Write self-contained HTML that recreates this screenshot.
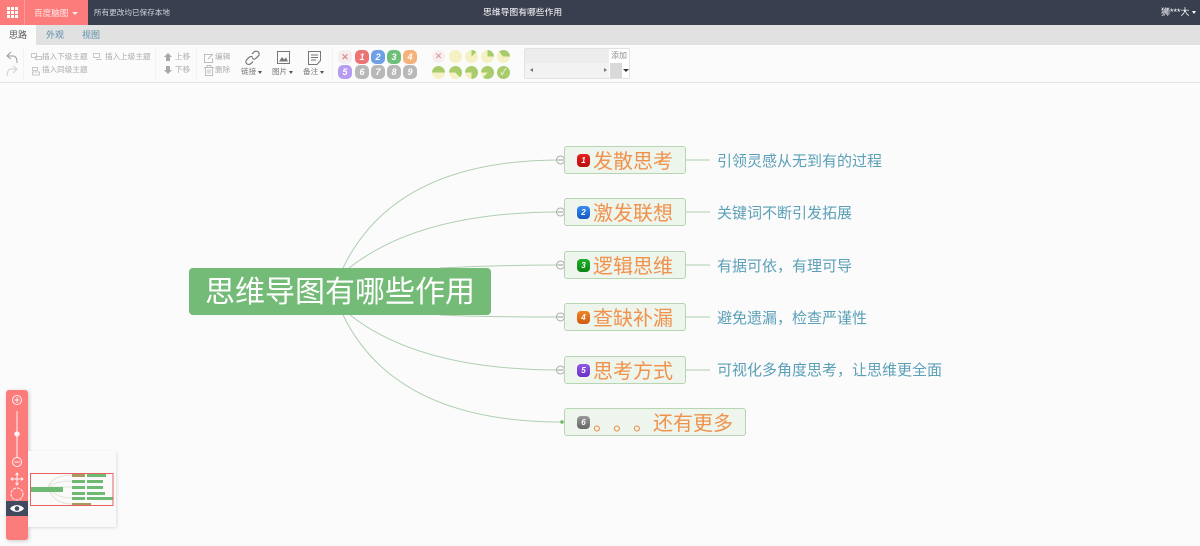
<!DOCTYPE html>
<html lang="zh"><head><meta charset="utf-8"><title>思维导图有哪些作用</title>
<style>
*{box-sizing:border-box}
html,body{margin:0;padding:0;width:1200px;height:546px;overflow:hidden;background:#fbfbfb;font-family:"Liberation Sans","Noto Sans CJK SC",sans-serif}
.a{position:absolute;white-space:nowrap}
.t{font-size:7.6px;color:#9a9a9a;line-height:12px}
.ic{position:absolute;width:14px;height:14px;border-radius:5px;color:#fff;font-size:9px;line-height:14px;text-align:center;font-style:italic;font-weight:bold}
.pg{position:absolute;width:13px;height:13px;border-radius:50%;background:#f5f1c4}
.node{position:absolute;left:564px;width:122px;height:28px;background:#eef5ec;border:1px solid #b5d5b3;border-radius:3px}
.nt{position:absolute;left:593px;font-size:20px;line-height:28px;color:#f0914c;white-space:nowrap;text-spacing-trim:space-all}
.sub{position:absolute;left:717px;font-size:15px;line-height:22px;color:#5b9fb8;white-space:nowrap}
.pri{position:absolute;left:577px;width:13px;height:13px;border-radius:4px;color:#fff;font-size:8px;line-height:13px;text-align:center;font-style:italic;font-weight:bold}
</style></head><body>
<!-- top bar -->
<div class="a" style="left:0;top:0;width:1200px;height:25px;background:#393f4f"></div>
<div class="a" style="left:0;top:0;width:88px;height:25px;background:#fc7c7c"></div>
<div class="a" style="left:24px;top:0;width:1px;height:25px;background:#fd9a9a"></div>
<svg class="a" style="left:7px;top:7px" width="11" height="11" fill="#fff"><rect x="0" y="0" width="3" height="3"/><rect x="4" y="0" width="3" height="3"/><rect x="8" y="0" width="3" height="3"/><rect x="0" y="4" width="3" height="3"/><rect x="4" y="4" width="3" height="3"/><rect x="8" y="4" width="3" height="3"/><rect x="0" y="8" width="3" height="3"/><rect x="4" y="8" width="3" height="3"/><rect x="8" y="8" width="3" height="3"/></svg>
<div class="a" style="left:34px;top:6px;font-size:8.6px;line-height:14px;color:#ffe9e9">百度脑图</div>
<div class="a" style="left:72px;top:12px;border:3px solid transparent;border-top:3px solid #ffe9e9"></div>
<div class="a" style="left:94px;top:6px;font-size:7.6px;line-height:14px;color:#d5d7dc">所有更改均已保存本地</div>
<div class="a" style="left:483px;top:5px;font-size:8.8px;line-height:14px;color:#fff">思维导图有哪些作用</div>
<div class="a" style="left:1161px;top:5px;font-size:9px;line-height:15px;color:#fff">狮***大</div>
<div class="a" style="left:1192px;top:11px;border:2.5px solid transparent;border-top:3px solid #fff"></div>
<!-- tabs -->
<div class="a" style="left:0;top:25px;width:1200px;height:20px;background:#e1e1e1"></div>
<div class="a" style="left:0;top:25px;width:36px;height:20px;background:#fbfbfb"></div>
<div class="a" style="left:9px;top:28px;font-size:9px;line-height:14px;color:#555">思路</div>
<div class="a" style="left:46px;top:28px;font-size:9px;line-height:14px;color:#5b8fa8">外观</div>
<div class="a" style="left:82px;top:28px;font-size:9px;line-height:14px;color:#5b8fa8">视图</div>
<!-- toolbar -->
<div class="a" style="left:0;top:45px;width:1200px;height:38px;background:#fbfbfb;border-bottom:1px solid #e4e4e4"></div>
<svg class="a" style="left:5px;top:50px" width="14" height="16" fill="none" stroke="#9a9a9a" stroke-width="1"><path d="M6 2L2 6L6 9M2 6H8C11 6 12 9 12 13"/></svg>
<svg class="a" style="left:5px;top:65px" width="14" height="14" fill="none" stroke="#cfcfcf" stroke-width="1"><path d="M8 1L12 4L8 8M12 4H6C3 4 2 8 2 11"/></svg>
<svg class="a" style="left:31px;top:52px" width="12" height="24" fill="none" stroke="#c8c8c8" stroke-width="1"><rect x="0.5" y="1.5" width="5" height="4"/><rect x="4.500" y="4.500" width="6" height="3"/><rect x="1.500" y="15.500" width="5" height="3"/><rect x="1.500" y="20" width="7" height="3"/></svg>
<div class="a t" style="left:42px;top:51px;color:#ababab">插入下级主题</div>
<svg class="a" style="left:93px;top:53px" width="10" height="9" fill="none" stroke="#c8c8c8"><rect x="0.5" y="0.5" width="6" height="4"/><path d="M3 6.500H9"/></svg>
<div class="a t" style="left:105px;top:51px;color:#ababab">插入上级主题</div>
<div class="a t" style="left:42px;top:64px;color:#ababab">插入同级主题</div>
<div class="a" style="left:23px;top:48px;width:1px;height:32px;background:#f3f3f3"></div>
<div class="a" style="left:155px;top:48px;width:1px;height:32px;background:#f3f3f3"></div>
<div class="a" style="left:196px;top:48px;width:1px;height:32px;background:#f3f3f3"></div>
<svg class="a" style="left:164px;top:53px" width="8" height="8" fill="#a8a8a8"><path d="M4 0L8 4H6V8H2V4H0Z"/></svg>
<svg class="a" style="left:164px;top:66px" width="8" height="8" fill="#a8a8a8"><path d="M2 0H6V4H8L4 8L0 4H2Z"/></svg>
<div class="a t" style="left:175px;top:51px;color:#ababab">上移</div>
<div class="a t" style="left:175px;top:64px;color:#ababab">下移</div>
<svg class="a" style="left:204px;top:53px" width="10" height="10" fill="none" stroke="#bdbdbd"><path d="M8 1.500H0.500V9.500H8.500V5M4 6L9 1"/></svg>
<svg class="a" style="left:204px;top:65px" width="10" height="11" fill="none" stroke="#bdbdbd"><path d="M0 2.500H10M3 2.500V0.500H7V2.500M1.500 2.500V10.500H8.500V2.500M4 4.500V8.500M6 4.500V8.500"/></svg>
<div class="a t" style="left:215px;top:51px;color:#ababab">编辑</div>
<div class="a t" style="left:215px;top:64px;color:#ababab">删除</div>
<svg class="a" style="left:245px;top:50px" width="15" height="16" fill="none" stroke="#777" stroke-width="1.200"><path d="M7 4L9 2C10.500 .8 12.500 1 13.500 2.200C14.500 3.500 14.300 5 13 6.300L11 8.300C9.800 9.300 8.300 9.300 7.300 8.300"/><path d="M8 11.500L6 13.500C4.500 14.800 2.600 14.700 1.500 13.500C.5 12.300 .7 10.600 2 9.400L4 7.400C5.200 6.400 6.700 6.400 7.700 7.400"/></svg>
<div class="a t" style="left:241px;top:66px;color:#777">链接</div>
<div class="a" style="left:258px;top:71px;border:2.500px solid transparent;border-top:3px solid #555"></div>
<svg class="a" style="left:277px;top:51px" width="13" height="13" fill="none" stroke="#777"><rect x="0.500" y="0.500" width="12" height="12"/><path d="M2 10.500L5 6L7 8.500L9 6.500L11 10.500Z" fill="#777" stroke="none"/></svg>
<div class="a t" style="left:272px;top:66px;color:#777">图片</div>
<div class="a" style="left:289px;top:71px;border:2.500px solid transparent;border-top:3px solid #555"></div>
<svg class="a" style="left:308px;top:51px" width="13" height="14" fill="none" stroke="#777"><path d="M0.500 0.500H12.500V9.500L9 13.500H0.500ZM3 4H10M3 6.500H10M3 9H8"/></svg>
<div class="a t" style="left:303px;top:66px;color:#777">备注</div>
<div class="a" style="left:320px;top:71px;border:2.500px solid transparent;border-top:3px solid #555"></div>
<div class="a" style="left:332px;top:48px;width:1px;height:32px;background:#f3f3f3"></div>
<!-- priority -->
<div class="ic" style="left:338px;top:50px;background:#f4eeee;color:#e08a8a;font-style:normal">✕</div>
<div class="ic" style="left:355px;top:50px;background:#ec7474">1</div>
<div class="ic" style="left:371px;top:50px;background:#6da0e6">2</div>
<div class="ic" style="left:387px;top:50px;background:#6cc07a">3</div>
<div class="ic" style="left:403px;top:50px;background:#f5b27a">4</div>
<div class="ic" style="left:338px;top:65px;background:#b59cf0">5</div>
<div class="ic" style="left:355px;top:65px;background:#b8b8b8">6</div>
<div class="ic" style="left:371px;top:65px;background:#b8b8b8">7</div>
<div class="ic" style="left:387px;top:65px;background:#b8b8b8">8</div>
<div class="ic" style="left:403px;top:65px;background:#b8b8b8">9</div>
<!-- progress -->
<div class="pg" style="left:432px;top:50px;background:#f7efef;color:#dd8a8a;font-size:9px;line-height:13px;text-align:center">✕</div>
<div class="pg" style="left:449px;top:50px"></div>
<div class="pg" style="left:465px;top:50px;background:conic-gradient(#f5f1c4 0 0,#a8cc6a 0 12.500%,#f5f1c4 12.500%)"></div>
<div class="pg" style="left:481px;top:50px;background:conic-gradient(#a8cc6a 0 25%,#f5f1c4 25%)"></div>
<div class="pg" style="left:497px;top:50px;background:conic-gradient(from -45deg,#a8cc6a 0 37.500%,#f5f1c4 37.500%)"></div>
<div class="pg" style="left:432px;top:66px;background:conic-gradient(from -90deg,#a8cc6a 0 50%,#f5f1c4 50%)"></div>
<div class="pg" style="left:449px;top:66px;background:conic-gradient(from -90deg,#a8cc6a 0 62.500%,#f5f1c4 62.500%)"></div>
<div class="pg" style="left:465px;top:66px;background:conic-gradient(from -90deg,#a8cc6a 0 75%,#f5f1c4 75%)"></div>
<div class="pg" style="left:481px;top:66px;background:conic-gradient(from -90deg,#a8cc6a 0 87.500%,#f5f1c4 87.500%)"></div>
<div class="pg" style="left:497px;top:66px;background:#a8cc6a;color:#fff;font-size:9px;line-height:13px;text-align:center">✓</div>
<!-- template box -->
<div class="a" style="left:524px;top:48px;width:106px;height:31px;border:1px solid #e2e2e2;border-radius:2px;background:#fff"></div>
<div class="a" style="left:525px;top:49px;width:84px;height:14px;background:#ececec"></div>
<div class="a t" style="left:611px;top:50px;color:#8a8a8a;font-size:8px">添加</div>
<div class="a" style="left:525px;top:63px;width:84px;height:15px;background:#f2f2f2"></div>
<div class="a" style="left:610px;top:63px;width:12px;height:15px;background:#d9d9d9"></div>
<div class="a" style="left:528px;top:68px;border:2px solid transparent;border-right:3px solid #777"></div>
<div class="a" style="left:604px;top:68px;border:2px solid transparent;border-left:3px solid #777"></div>
<div class="a" style="left:623px;top:69px;border:3px solid transparent;border-top:3px solid #333"></div>
<!-- connectors -->
<svg class="a" style="left:0;top:0" width="1200" height="546" fill="none" stroke="#aecfb0" stroke-width="1">
<path d="M343 268Q395 160 560 160"/>
<path d="M349 268Q420 212 560 212"/>
<path d="M440 268C480 266 520 265 560 265"/>
<path d="M440 315C480 317 520 317 560 317"/>
<path d="M350 315Q420 370 560 370"/>
<path d="M343 315Q395 422 562 422"/>
<path d="M686 160H710M686 212H710M686 265H710M686 317H710M686 370H710"/>
<g stroke="#aaa" fill="#fbfbfb"><circle cx="560.500" cy="160" r="4"/><circle cx="560.500" cy="212" r="4"/><circle cx="560.500" cy="265" r="4"/><circle cx="560.500" cy="317" r="4"/><circle cx="560.500" cy="370" r="4"/></g>
<path d="M557.500 160H563.500M557.500 212H563.500M557.500 265H563.500M557.500 317H563.500M557.500 370H563.500" stroke="#999"/>
<circle cx="562" cy="422" r="1.800" fill="#6dbb6d" stroke="none"/>
</svg>
<!-- root -->
<div class="a" style="left:189px;top:268px;width:302px;height:47px;background:#73bb76;border-radius:4px"></div>
<div class="a" style="left:205px;top:271px;font-size:30px;line-height:44px;color:#fff">思维导图有哪些作用</div>
<!-- nodes -->
<div class="node" style="top:146px"></div><div class="pri" style="top:154px;background:linear-gradient(#e82020,#b80c0c)">1</div><div class="nt" style="top:148px">发散思考</div><div class="sub" style="top:151px">引领灵感从无到有的过程</div>
<div class="node" style="top:198px"></div><div class="pri" style="top:206px;background:linear-gradient(#3a8cf0,#1458c0)">2</div><div class="nt" style="top:200px">激发联想</div><div class="sub" style="top:203px">关键词不断引发拓展</div>
<div class="node" style="top:251px"></div><div class="pri" style="top:259px;background:linear-gradient(#20b028,#0c8414)">3</div><div class="nt" style="top:253px">逻辑思维</div><div class="sub" style="top:256px">有据可依，有理可导</div>
<div class="node" style="top:303px"></div><div class="pri" style="top:311px;background:linear-gradient(#f08428,#d05c10)">4</div><div class="nt" style="top:305px">查缺补漏</div><div class="sub" style="top:308px">避免遗漏，检查严谨性</div>
<div class="node" style="top:356px"></div><div class="pri" style="top:364px;background:linear-gradient(#9058e8,#6a30c8)">5</div><div class="nt" style="top:358px">思考方式</div><div class="sub" style="top:360px">可视化多角度思考，让思维更全面</div>
<div class="node" style="top:408px;width:182px"></div><div class="pri" style="top:416px;background:linear-gradient(#999,#666)">6</div>
<div class="nt" style="top:410px">。</div><div class="nt" style="top:410px;left:613px">。</div><div class="nt" style="top:410px;left:633px">。</div><div class="nt" style="top:410px;left:653px">还有更多</div>
<!-- zoom panel -->
<div class="a" style="left:6px;top:390px;width:22px;height:150px;background:#fc7c7c;border-radius:3px;box-shadow:1px 1px 4px rgba(0,0,0,.2)"></div>
<svg class="a" style="left:6px;top:390px" width="22" height="112" fill="none" stroke="#fff" stroke-width="1" opacity=".9">
<circle cx="11" cy="10" r="4.500"/><path d="M8.500 10H13.500M11 7.500V12.500"/>
<path d="M11 21V68"/><circle cx="11" cy="44" r="2.200" fill="#fff"/>
<circle cx="11" cy="72" r="4.500"/><path d="M8.500 72H13.500"/>
<path d="M11 83V95M5 89H17M9.500 85L11 83L12.500 85M9.500 93L11 95L12.500 93M7 87.500L5 89L7 90.500M15 87.500L17 89L15 90.500"/>
<circle cx="11" cy="104" r="6" stroke-dasharray="3 1"/></svg>
<div class="a" style="left:6px;top:501px;width:22px;height:15px;background:#414a5e"></div>
<svg class="a" style="left:10px;top:503px" width="14" height="11"><path d="M0 5.500C3 1 11 1 14 5.500C11 10 3 10 0 5.500Z" fill="#fff"/><circle cx="7" cy="5.500" r="2.300" fill="#414a5e"/></svg>
<!-- minimap -->
<div class="a" style="left:28px;top:451px;width:88px;height:76px;background:#fafafa;box-shadow:1px 1px 3px rgba(0,0,0,.12)"></div>
<svg class="a" style="left:28px;top:451px" width="88" height="76" fill="none">
<path d="M20 36Q25 24 44 24M20 36Q28 30 44 30M20 36H44M20 36Q28 47 44 47M20 36Q25 53 44 53" stroke="#e3e3d8"/>
<g fill="#6fba72"><rect x="3" y="36" width="32" height="5"/>
<rect x="44" y="29" width="13" height="3"/><rect x="44" y="35" width="13" height="3"/><rect x="44" y="41" width="13" height="3"/><rect x="44" y="46" width="13" height="3"/>
<rect x="59" y="23" width="19" height="3"/><rect x="59" y="29" width="16" height="3"/><rect x="59" y="35" width="16" height="3"/><rect x="59" y="41" width="18" height="3"/><rect x="59" y="46" width="26" height="3"/></g>
<rect x="44" y="23" width="13" height="3" fill="#a89a5e"/>
<rect x="44" y="52" width="19" height="3" fill="#a89a5e"/>
<rect x="2.500" y="22.500" width="82.500" height="32" stroke="#e66060" stroke-width="1"/>
</svg>
</body></html>
